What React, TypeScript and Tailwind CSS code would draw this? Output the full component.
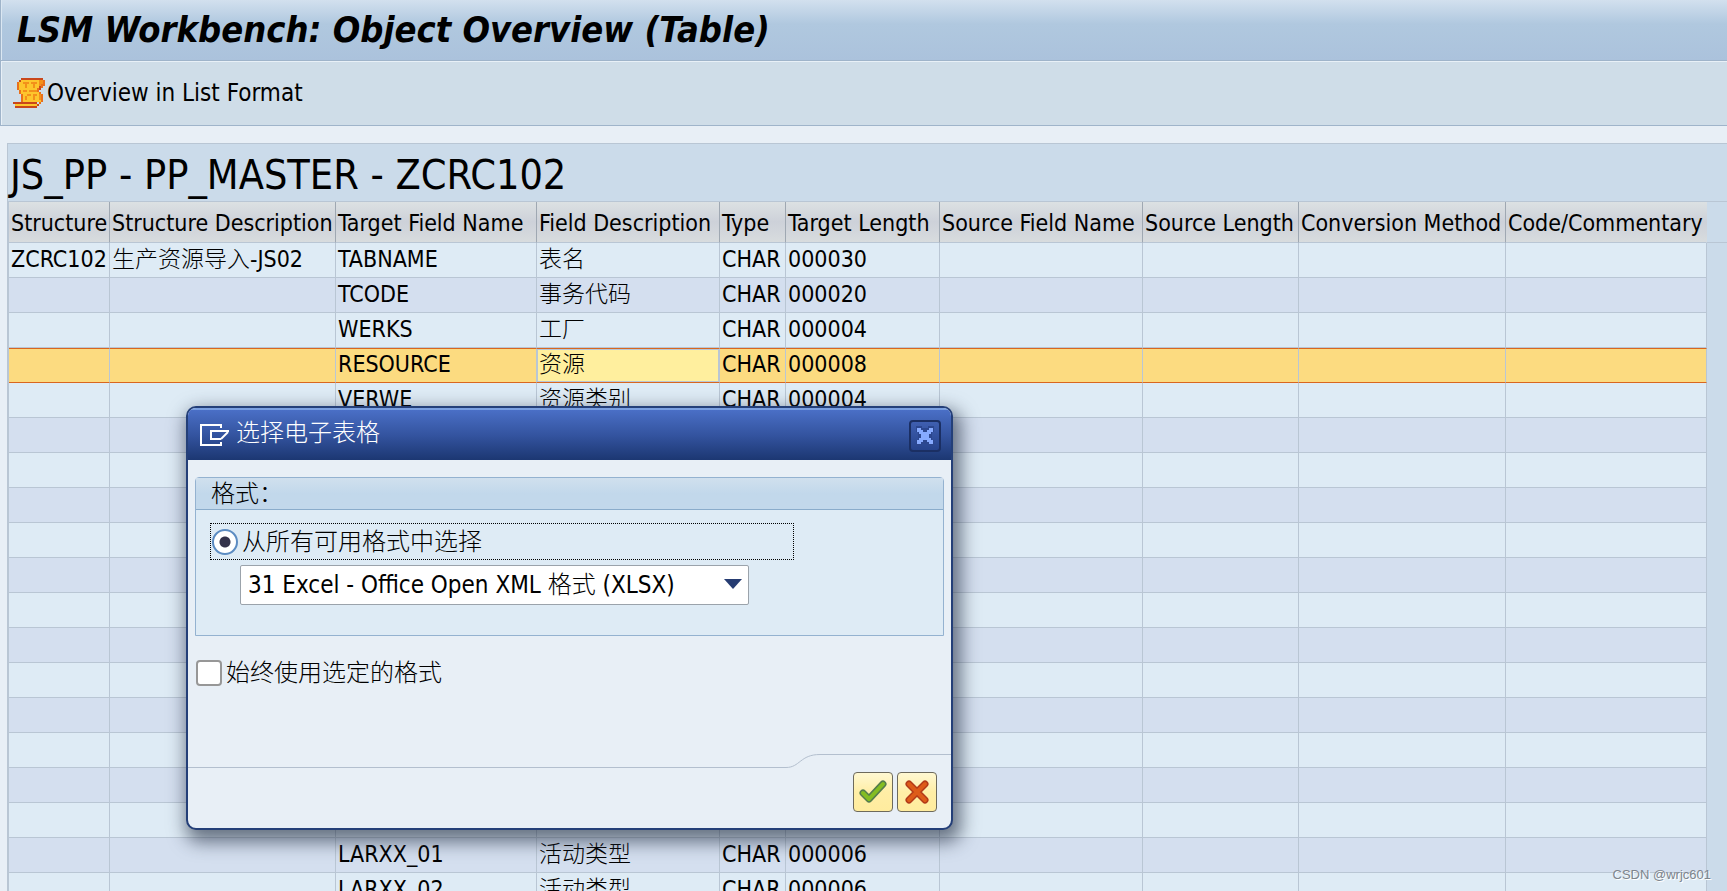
import type { ReactNode } from "react";

type Row = {
  structure?: string;
  structureText?: string;
  field?: string;
  fieldText?: string;
  type?: string;
  length?: string;
};

const columns = [
  { label: "Structure", width: "w-[101px]" },
  { label: "Structure Description", width: "w-[226px]" },
  { label: "Target Field Name", width: "w-[201px]" },
  { label: "Field Description", width: "w-[183px]" },
  { label: "Type", width: "w-[66px]" },
  { label: "Target Length", width: "w-[154px]" },
  { label: "Source Field Name", width: "w-[203px]" },
  { label: "Source Length", width: "w-[156px]" },
  { label: "Conversion Method", width: "w-[207px]" },
  { label: "Code/Commentary", width: "w-[201px]" },
];

const emptyRows: Row[] = Array.from({ length: 12 }, () => ({}));

const rows: Row[] = [
  {
    structure: "ZCRC102",
    structureText: "生产资源导入-JS02",
    field: "TABNAME",
    fieldText: "表名",
    type: "CHAR",
    length: "000030",
  },
  { field: "TCODE", fieldText: "事务代码", type: "CHAR", length: "000020" },
  { field: "WERKS", fieldText: "工厂", type: "CHAR", length: "000004" },
  { field: "RESOURCE", fieldText: "资源", type: "CHAR", length: "000008" },
  { field: "VERWE", fieldText: "资源类别", type: "CHAR", length: "000004" },
  ...emptyRows,
  { field: "LARXX_01", fieldText: "活动类型", type: "CHAR", length: "000006" },
  { field: "LARXX_02", fieldText: "活动类型", type: "CHAR", length: "000006" },
];

const selectedRow = 3;
const selectedColumn = 3;

function ScrollIcon() {
  return (
    <svg width="32" height="30" viewBox="0 0 16 15" shapeRendering="crispEdges" aria-hidden="true">
      <path fill="#fdc52c" d="M4 1h9v1H4zM3 2h10v3H3zM3 5h10v2H3zM4 7h9v1H4zM5 8h9v4H5zM1 13h11v1H1z" />
      <path fill="#f3901a" d="M13 1h2v2h-2zM13 3h1v1h-1zM5 2h3v1H5zM9 2h3v1H9zM6 3h1v2H6zM10 3h1v2h-1zM5 6h2v1H5zM8 6h4v1H8zM7 8h2v1H7zM10 8h2v1h-2zM6 9h1v2H6zM10 9h1v2h-1zM13 8h1v3h-1z" />
      <path fill="#c9471b" d="M4 0h11v1H4zM3 1h1v1H3zM13 4h1v2h-1z" />
      <path fill="#e8701c" d="M2 2h1v4H2zM3 6h1v2H3zM4 8h1v4H4zM15 1h1v3h-1zM14 3h1v2h-1zM12 5h1v2h-1zM13 7h1v1h-1zM14 8h1v4h-1zM13 12h1v1h-1z" />
      <path fill="#c9471b" d="M0 12h12v1H0zM1 14h11v1H1zM12 13h1v1h-1z" />
    </svg>
  );
}

function ModalIcon() {
  return (
    <svg width="30" height="22" viewBox="0 0 30 22" fill="none" stroke="#fff" strokeWidth="2" aria-hidden="true">
      <path d="M21 4V1H1v20h20v-3" />
      <path d="M21 15H11V7h18" />
      <path d="M28 8l-7 7" />
    </svg>
  );
}

function CloseIcon() {
  return (
    <svg width="20" height="20" viewBox="0 0 20 20" shapeRendering="crispEdges" aria-hidden="true">
      <path
        fill="#2c478f"
        d="M1 0h6v2h6V0h6v6h-2v8h2v6h-6v-2H7v2H1v-6h2V6H1z"
      />
      <path
        fill="#86aaff"
        d="M2 2h4v2h2v2h4V4h2V2h4v4h-2v2h-2v4h2v2h2v4h-4v-2h-2v-2H8v2H6v2H2v-4h2v-2h2V8H4V6H2z"
      />
    </svg>
  );
}

function CheckIcon() {
  return (
    <svg width="28" height="24" viewBox="0 0 28 24" fill="none" strokeLinecap="round" strokeLinejoin="round" aria-hidden="true">
      <path d="M4 13l6 6L24 4" stroke="#557d4c" strokeWidth="7" />
      <path d="M4 13l6 6L24 4" stroke="#84bd22" strokeWidth="4" />
    </svg>
  );
}

function CrossIcon() {
  return (
    <svg width="24" height="24" viewBox="0 0 24 24" fill="none" strokeLinecap="round" aria-hidden="true">
      <path d="M4 4l16 16M20 4L4 20" stroke="#b33a18" strokeWidth="7" />
      <path d="M4 4l16 16M20 4L4 20" stroke="#dd5b18" strokeWidth="4" />
    </svg>
  );
}

function DialogButton({ label, children }: { label: string; children: ReactNode }) {
  return (
    <button
      type="button"
      aria-label={label}
      className="flex h-10 w-10 items-center justify-center rounded-sm border border-[#6d6a5c] bg-linear-to-b from-[#fff8d2] via-[#ffeea6] to-[#ffec9e]"
    >
      {children}
    </button>
  );
}

function FieldTable() {
  return (
    <table className="w-[1698px] table-fixed border-separate border-spacing-0 text-[23px] leading-7 whitespace-nowrap">
      <thead>
        <tr>
          {columns.map((col) => (
            <th
              key={col.label}
              className={`${col.width} h-[41px] border-r border-b border-r-[#9fa8b2] border-b-[#b9c6d4] bg-linear-to-b from-[#dce1e3] via-[#cdd1d9] to-[#d8dcde] pt-0.5 pl-[2px] text-left font-light last:border-r-transparent`}
            >
              {col.label}
            </th>
          ))}
        </tr>
      </thead>
      <tbody>
        {rows.map((row, i) => {
          const selected = i === selectedRow;
          const cells = [row.structure, row.structureText, row.field, row.fieldText, row.type, row.length, "", "", "", ""];
          return (
            <tr key={i} className={selected ? "bg-[#fcdb80]" : "bg-[#deebf5] even:bg-[#d4dfef]"}>
              {cells.map((cell, j) => (
                <td
                  key={j}
                  className={`h-[35px] border-r border-b border-r-[#b9c6d4] p-0 pb-[3px] pl-[2px] ${
                    selected ? "border-t border-t-[#d9661f] border-b-[#d9661f]" : "border-b-[#b9c6d4]"
                  } ${selected && j === selectedColumn ? "bg-[#ffef9e] shadow-[inset_0_0_0_1px_#b9c6d4]" : ""}`}
                >
                  {cell}
                </td>
              ))}
            </tr>
          );
        })}
      </tbody>
    </table>
  );
}

function FormatDialog() {
  return (
    <div
      role="dialog"
      aria-labelledby="dialog-title"
      className="absolute top-[406px] left-[186px] flex h-[424px] w-[767px] flex-col overflow-hidden rounded-[10px] border-2 border-[#243f78] bg-[#e8eff6] shadow-[4px_8px_18px_4px_rgba(40,50,70,0.65)]"
    >
      <div className="flex h-[52px] shrink-0 items-center gap-[6px] border-t-2 border-[#7a9fe0] bg-linear-to-b from-[#4a6fc6] via-[#3454a0] to-[#1c3772] pr-[10px] pl-3">
        <ModalIcon />
        <h2 id="dialog-title" className="flex-1 pb-1 text-white">
          选择电子表格
        </h2>
        <button
          type="button"
          aria-label="关闭"
          className="mt-0.5 flex h-8 w-8 items-center justify-center rounded-sm border-2 border-[#1b2f63] bg-linear-to-b from-[#3f5fb0] to-[#26438c]"
        >
          <CloseIcon />
        </button>
      </div>

      <form className="flex flex-1 flex-col">
        <section className="mx-[7px] mt-[17px] h-[159px] rounded-t-sm border border-[#94b2d0] bg-[#deebf5]">
          <h3 className="h-8 border-b border-[#8aaccb] bg-linear-to-b from-[#d0e0ee] via-[#c2d8eb] to-[#c2d8eb] pl-[15px]">
            格式：
          </h3>
          <label className="mt-[13px] ml-[14px] flex h-[37px] w-[584px] items-center gap-1 border border-dotted border-black pl-px">
            <input
              type="radio"
              name="format"
              defaultChecked
              className="h-[26px] w-[26px] appearance-none rounded-full border-2 border-[#5c8cc2] bg-[radial-gradient(circle,#33324a_5px,#fff_6px)]"
            />
            从所有可用格式中选择
          </label>
          <div className="relative mt-[5px] ml-11 w-[509px]">
            <select
              aria-label="格式"
              className="h-10 w-full appearance-none rounded-xs border border-[#9ba3ab] bg-white pl-[7px]"
            >
              <option>31 Excel - Office Open XML 格式 (XLSX)</option>
            </select>
            <svg className="pointer-events-none absolute top-[14px] right-[7px]" width="18" height="10" viewBox="0 0 18 10" aria-hidden="true">
              <path d="M0 0h18L9 10z" fill="#263c72" />
            </svg>
          </div>
        </section>

        <label className="mt-6 ml-2 flex h-[26px] items-center gap-1">
          <input
            type="checkbox"
            className="h-[26px] w-[26px] appearance-none rounded-sm border-2 border-[#979797] bg-white"
          />
          始终使用选定的格式
        </label>

        <div className="mt-auto flex h-[75px] flex-col">
          <div className="flex h-[15px]">
            <div className="flex-1 border-b border-[#b3bfce]" />
            <svg width="34" height="15" viewBox="0 0 34 15" fill="none" stroke="#b3bfce" aria-hidden="true">
              <path d="M0 14.5C14 14.5 14 1.5 34 1.5" />
            </svg>
            <div className="mt-px w-[131px] border-t border-[#b3bfce]" />
          </div>
          <div className="mt-1 flex justify-end gap-1 pr-[14px]">
            <DialogButton label="确认">
              <CheckIcon />
            </DialogButton>
            <DialogButton label="取消">
              <CrossIcon />
            </DialogButton>
          </div>
        </div>
      </form>
    </div>
  );
}

export default function App() {
  return (
    <main className="relative flex h-screen flex-col overflow-hidden bg-[#e8eff6] font-['DejaVu_Sans_Condensed','Noto_Sans_CJK_SC',sans-serif] text-2xl/8 font-light text-black">
      <header className="flex h-[61px] shrink-0 items-center border-b border-l border-[#9fb4ca] bg-linear-to-b from-[#d2e0ee] via-[#b0c8df] via-40% to-[#abc2dc] pl-4 shadow-[inset_1px_0_0_#dbe7f2]">
        <h1 className="text-4xl font-bold italic">LSM Workbench: Object Overview (Table)</h1>
      </header>
      <div className="flex h-[65px] shrink-0 items-center border-b border-l border-[#9fb4ca] bg-[#cfdde8] pl-3 shadow-[inset_1px_1px_0_#e8f0f7]">
        <button type="button" className="flex items-center gap-[2px]">
          <ScrollIcon />
          Overview in List Format
        </button>
      </div>

      <section className="mt-[17px] ml-[7px] flex-1 border-t border-l border-[#b9c6d4] bg-[#cbdbea]">
        <h2 className="flex h-[58px] items-center border-b border-[#b9c6d4] pt-1 pl-[2px] text-[41px]">
          JS_PP - PP_MASTER - ZCRC102
        </h2>
        <div className="flex border-l border-[#b9c6d4]">
          <FieldTable />
          <div className="h-[41px] flex-1 border-b border-[#b9c6d4]" />
        </div>
      </section>

      <FormatDialog />

      <p className="absolute right-4 bottom-2 font-['Liberation_Sans',sans-serif] text-[13px]/4 text-[#7d848c] [text-shadow:1px_1px_0_#fff]">
        CSDN @wrjc601
      </p>
    </main>
  );
}
